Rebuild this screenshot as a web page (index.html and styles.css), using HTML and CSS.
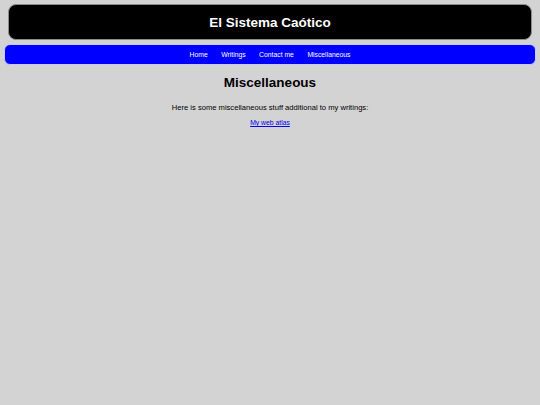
FILE: index.html
```html
<!DOCTYPE html>
<html>
<head>
<meta charset="utf-8">
<link rel="stylesheet" href="styles.css">
</head>
<body>
<header class="site-header">El Sistema Caótico</header>
<nav class="site-nav">
  <a href="#">Home</a>
  <a href="#">Writings</a>
  <a href="#">Contact me</a>
  <a href="#">Miscellaneous</a>
</nav>
<main class="content">
  <h1 class="title">Miscellaneous</h1>
  <p class="intro">Here is some miscellaneous stuff additional to my writings:</p>
  <p class="links"><a href="#">My web atlas</a></p>
</main>
</body>
</html>
```
FILE: styles.css
```css
html, body {
  margin: 0;
  padding: 0;
  background: #d3d3d3;
  font-family: "Liberation Sans", Arial, sans-serif;
}
body {
  padding: 4px 4px;
}
.site-header {
  margin: 0 4px;
  height: 34px;
  background: #000;
  color: #fff;
  border: 1px solid #8a8a8a;
  border-radius: 8px;
  display: flex;
  align-items: center;
  justify-content: center;
  font-weight: bold;
  font-size: 13.5px;
}
.site-nav {
  margin-top: 4px;
  height: 19px;
  background: #0000ff;
  border: 1px solid #c8c8ff;
  border-radius: 6px;
  display: flex;
  align-items: center;
  justify-content: center;
  gap: 13.5px;
}
.site-nav a {
  color: #fff;
  text-decoration: none;
  font-size: 6.8px;
}
.content {
  text-align: center;
}
.title {
  margin: 10px 0 0;
  font-size: 13.5px;
  font-weight: bold;
}
.intro {
  margin: 13px 0 0;
  font-size: 7.6px;
}
.links {
  margin: 7px 0 0;
  font-size: 6.8px;
}
.links a {
  color: #0000ee;
}
```
